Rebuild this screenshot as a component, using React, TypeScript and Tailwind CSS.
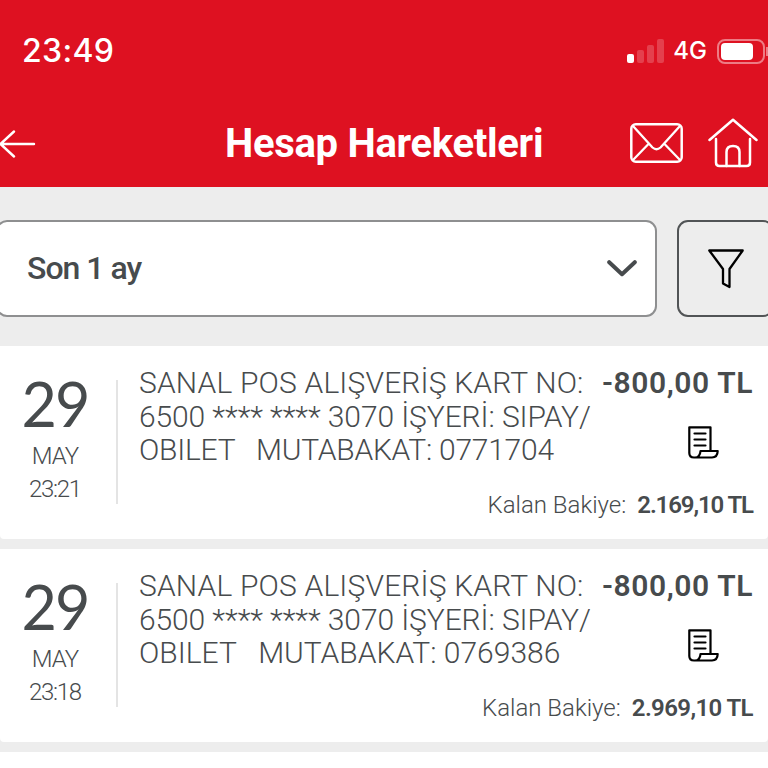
import type { ReactNode } from "react";

type Line = {
  text: string;
  tracking: string;
};

type Transaction = {
  day: string;
  month: string;
  time: string;
  lines: Line[];
  amount: string;
  balance: string;
  balanceTracking: string;
};

const transactions: Transaction[] = [
  {
    day: "29",
    month: "MAY",
    time: "23:21",
    lines: [
      { text: "SANAL POS ALIŞVERİŞ KART NO:", tracking: "tracking-[0.16px]" },
      { text: "6500 **** **** 3070 İŞYERİ: SIPAY/", tracking: "tracking-[-0.1px]" },
      { text: "OBILET   MUTABAKAT: 0771704", tracking: "tracking-[-0.24px]" },
    ],
    amount: "-800,00 TL",
    balance: "2.169,10 TL",
    balanceTracking: "tracking-[-1.1px]",
  },
  {
    day: "29",
    month: "MAY",
    time: "23:18",
    lines: [
      { text: "SANAL POS ALIŞVERİŞ KART NO:", tracking: "tracking-[0.16px]" },
      { text: "6500 **** **** 3070 İŞYERİ: SIPAY/", tracking: "tracking-[-0.1px]" },
      { text: "OBILET   MUTABAKAT: 0769386", tracking: "tracking-[0px]" },
    ],
    amount: "-800,00 TL",
    balance: "2.969,10 TL",
    balanceTracking: "tracking-[-0.6px]",
  },
];

type IconProps = {
  className: string;
  viewBox: string;
  children: ReactNode;
};

function Icon({ className, viewBox, children }: IconProps) {
  return (
    <svg
      className={className}
      viewBox={viewBox}
      fill="none"
      stroke="currentColor"
      strokeLinecap="round"
      strokeLinejoin="round"
      aria-hidden="true"
    >
      {children}
    </svg>
  );
}

function StatusBar() {
  return (
    <div className="flex h-[102px] items-center justify-between pl-[22px]">
      <span className="font-['Inter'] text-[32px] leading-none font-medium tracking-[0.3px]">23:49</span>
      <div className="flex items-center">
        <div className="flex h-[24px] items-end gap-[3px]">
          <span className="h-[9px] w-[7px] rounded-[2px] bg-white" />
          <span className="h-[13px] w-[7px] rounded-[2px] bg-white/20" />
          <span className="h-[18px] w-[7px] rounded-[2px] bg-white/20" />
          <span className="h-[24px] w-[7px] rounded-[2px] bg-white/20" />
        </div>
        <span className="ml-[9px] font-['Inter'] text-[24px] leading-none font-medium">4G</span>
        <div className="ml-[10px] h-[25px] w-[48px] rounded-[8px] border-2 border-white/45 p-[2px]">
          <div className="h-full w-[32px] rounded-[4px] bg-white" />
        </div>
        <span className="ml-[1px] h-[9px] w-[2px] bg-white/45" />
      </div>
    </div>
  );
}

function NavBar() {
  return (
    <div className="flex h-[85px] items-center pb-[2px]">
      <Icon className="h-[30px] w-[36px]" viewBox="0 0 36 30">
        <path d="M34 15H0.5M14 2.5L0.5 15L14 27.5" strokeWidth="2.4" />
      </Icon>
      <h1 className="ml-[189px] text-[40px] leading-none font-bold tracking-[-0.3px] whitespace-nowrap">
        Hesap Hareketleri
      </h1>
      <div className="ml-auto flex items-center gap-[25px] pr-[10px] pb-[2px]">
        <Icon className="h-[40px] w-[53px]" viewBox="0 0 53 40">
          <rect x="1.3" y="1.3" width="50.4" height="37.4" rx="4.5" strokeWidth="2.5" />
          <path d="M3 3L22.5 24.5Q26.5 28 30.5 24.5L50 3M3 37L18 21.5M50 37L35 21.5" strokeWidth="2.3" />
        </Icon>
        <Icon className="h-[50px] w-[50px]" viewBox="0 0 50 50">
          <path d="M1.5 22L25 1.8L48.5 22" strokeWidth="2.5" />
          <path d="M8 21V44.5Q8 48 11.5 48H38.5Q42 48 42 44.5V21" strokeWidth="2.5" />
          <path d="M18.5 48V34Q18.5 28 25 28Q31.5 28 31.5 34V48" strokeWidth="2.5" />
        </Icon>
      </div>
    </div>
  );
}

function FilterRow() {
  return (
    <div className="flex h-[159px] gap-[20px] overflow-hidden pt-[33px]">
      <div className="-ml-[4px] flex h-[97px] w-[661px] shrink-0 items-center justify-between rounded-[11px] border-2 border-[#8e8f90] bg-white pr-[18px] pl-[29px]">
        <span className="pb-[1px] text-[32px] leading-none font-medium tracking-[-1px]">Son 1 ay</span>
        <Icon className="h-[17px] w-[30px]" viewBox="0 0 30 17">
          <path d="M2.2 2.2L15 14.2L27.8 2.2" strokeWidth="4" />
        </Icon>
      </div>
      <div className="flex h-[97px] w-[97px] shrink-0 items-center justify-center rounded-[11px] border-2 border-[#515456] text-black">
        <Icon className="h-[40px] w-[36px]" viewBox="0 0 36 40">
          <path d="M1.3 1.5H34.7L21.5 20V38L15 34.5V20Z" strokeWidth="2.3" />
        </Icon>
      </div>
    </div>
  );
}

function TransactionCard({ day, month, time, lines, amount, balance, balanceTracking }: Transaction) {
  return (
    <article className="flex h-[193px] rounded-b-[4px] bg-white pt-[20px]">
      <div className="mt-[14px] flex h-[124px] w-[118px] shrink-0 flex-col items-center border-r-2 border-[#e4e4e4] pr-[6px]">
        <span className="-mt-[1px] font-['Lato'] text-[61px] leading-[50px] tracking-[-2px]">{day}</span>
        <span className="mt-[11px] text-[24px] leading-[33px] font-light tracking-[-1px]">{month}</span>
        <span className="text-[24px] leading-[33px] font-light tracking-[-1.3px]">{time}</span>
      </div>
      <div className="flex grow flex-col pr-[15px] pl-[21px]">
        <div className="flex justify-between">
          <div className="w-[460px] shrink-0 text-[30px] leading-[33.5px] font-light whitespace-pre">
            {lines.map((line) => (
              <p key={line.text} className={line.tracking}>
                {line.text}
              </p>
            ))}
          </div>
          <div className="flex w-0 flex-col items-end">
            <span className="text-[30px] leading-[33.5px] font-semibold tracking-[0.6px] whitespace-nowrap">
              {amount}
            </span>
            <Icon className="mt-[26px] mr-[34px] h-[33px] w-[31px] shrink-0 text-black" viewBox="0 0 31 33">
              <path
                d="M22.5 25V1.3H1.3V27Q1.3 31.5 6 31.5H24Q29.5 31.5 29.7 25H12.5Q12 31.5 7 31.5"
                strokeWidth="2.2"
              />
              <path d="M6.5 7.5H17.5M6.5 13.5H17.5M6.5 19.5H17.5" strokeWidth="2.2" />
            </Icon>
          </div>
        </div>
        <div className="mt-[22px] flex justify-end gap-[11px] text-[24px] leading-[33px] whitespace-nowrap">
          <span className="font-light">Kalan Bakiye:</span>
          <span className={`font-semibold ${balanceTracking}`}>{balance}</span>
        </div>
      </div>
    </article>
  );
}

export default function App() {
  return (
    <div className="h-screen w-full overflow-hidden bg-[#ededed] font-['Roboto',sans-serif] text-[#474b4d]">
      <header className="bg-[#de1121] text-white">
        <StatusBar />
        <NavBar />
      </header>
      <FilterRow />
      <main className="flex flex-col gap-[10px]">
        {transactions.map((item) => (
          <TransactionCard key={item.time} {...item} />
        ))}
        <div className="h-[20px] bg-white" />
      </main>
    </div>
  );
}
